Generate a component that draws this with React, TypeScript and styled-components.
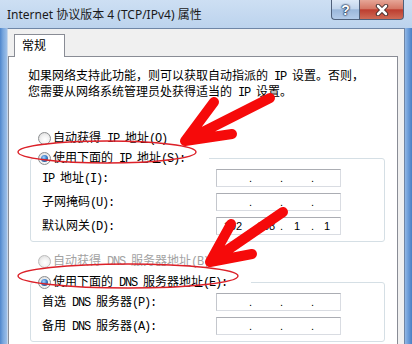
import styled, { createGlobalStyle } from "styled-components";

const GlobalStyle = createGlobalStyle`
  html, body {
    margin: 0;
    padding: 0;
    background: #fff;
  }
  body {
    font-family: "Noto Sans CJK SC", sans-serif;
  }
`;

const ASCII = /([\x20-\x7e]+)/;

// SimSun draws latin at half width, so ascii runs get a mono face squeezed to 6px
function Mixed({ text }: { text: string }) {
  return (
    <>
      {text.split(ASCII).map((part, index) =>
        ASCII.test(part) ? <Half key={index}>{part}</Half> : part
      )}
    </>
  );
}

interface IpProps {
  value?: string[];
}

function IpField({ value = ["", "", "", ""] }: IpProps) {
  return (
    <IpBox>
      <IpPart>{value[0]}</IpPart>
      <IpDot>.</IpDot>
      <IpPart>{value[1]}</IpPart>
      <IpDot>.</IpDot>
      <IpPart>{value[2]}</IpPart>
      <IpDot>.</IpDot>
      <IpPart>{value[3]}</IpPart>
    </IpBox>
  );
}

interface RadioProps {
  label: string;
  checked?: boolean;
  disabled?: boolean;
}

function Radio({ label, checked, disabled }: RadioProps) {
  return (
    <RadioLabel $disabled={disabled}>
      <RadioDot $checked={checked} $disabled={disabled} />
      <span>
        <Mixed text={label} />
      </span>
    </RadioLabel>
  );
}

const ipRows = [
  { label: "IP 地址(I):", value: undefined },
  { label: "子网掩码(U):", value: undefined },
  { label: "默认网关(D):", value: ["192", "168", "1", "1"] },
];

const dnsRows = [
  { label: "首选 DNS 服务器(P):" },
  { label: "备用 DNS 服务器(A):" },
];

export default function App() {
  return (
    <>
      <GlobalStyle />
      <Window>
        <TitleBar>
          <Title>Internet 协议版本 4 (TCP/IPv4) 属性</Title>
          <Captions>
            <CaptionButton $kind="help">?</CaptionButton>
            <CaptionButton $kind="close">
              <svg width="14" height="12" viewBox="0 0 14 12">
                <path
                  d="M3 2 L11 10 M11 2 L3 10"
                  stroke="#3a2626"
                  strokeWidth="4.4"
                  strokeLinecap="round"
                />
                <path
                  d="M3 2 L11 10 M11 2 L3 10"
                  stroke="#fff"
                  strokeWidth="2.6"
                  strokeLinecap="round"
                />
              </svg>
            </CaptionButton>
          </Captions>
        </TitleBar>

        <Frame>
          <TabRow>
            <Tab>常规</Tab>
          </TabRow>
          <Panel>
            <Intro>
              <Mixed text="如果网络支持此功能，则可以获取自动指派的 IP 设置。否则，" />
              <br />
              <Mixed text="您需要从网络系统管理员处获得适当的 IP 设置。" />
            </Intro>

            <TopRadio>
              <Radio label="自动获得 IP 地址(O)" />
            </TopRadio>

            <Group $top={4}>
              <Legend>
                <Radio label="使用下面的 IP 地址(S):" checked />
              </Legend>
              <FieldGrid>
                {ipRows.map((row) => (
                  <FieldRow key={row.label}>
                    <FieldLabel>
                      <Mixed text={row.label} />
                    </FieldLabel>
                    <IpField value={row.value} />
                  </FieldRow>
                ))}
              </FieldGrid>
            </Group>

            <TopRadio $top={11}>
              <Radio label="自动获得 DNS 服务器地址(B)" disabled />
            </TopRadio>

            <Group $top={5}>
              <Legend>
                <Radio label="使用下面的 DNS 服务器地址(E):" checked />
              </Legend>
              <FieldGrid>
                {dnsRows.map((row) => (
                  <FieldRow key={row.label}>
                    <FieldLabel>
                      <Mixed text={row.label} />
                    </FieldLabel>
                    <IpField />
                  </FieldRow>
                ))}
              </FieldGrid>
            </Group>
          </Panel>
        </Frame>

        <Marks width="412" height="344" viewBox="0 0 412 344">
          <ellipse cx="107" cy="152" rx="89" ry="11" fill="none" stroke="#dc2028" strokeWidth="1.4" />
          <ellipse cx="128" cy="276" rx="110" ry="12" fill="none" stroke="#dc2028" strokeWidth="1.4" />
          <path
            d="M270 98 L185 141 M214 102 L185 141 L232 134"
            fill="none"
            stroke="#f60a0a"
            strokeWidth="10"
            strokeLinecap="round"
            strokeLinejoin="round"
          />
          <path
            d="M283 212 L210 262 M231 224 L210 262 L252 254"
            fill="none"
            stroke="#f60a0a"
            strokeWidth="10"
            strokeLinecap="round"
            strokeLinejoin="round"
          />
        </Marks>
      </Window>
    </>
  );
}

const Window = styled.div`
  position: relative;
  width: 412px;
  height: 344px;
  overflow: hidden;
  display: flex;
  flex-direction: column;
  background: linear-gradient(
    90deg,
    #4f86cc 0,
    #78a6dd 3px,
    #9dbfe8 7px,
    #9dbfe8 404px,
    #6f9fda 408px,
    #4a7fc4 412px
  );
`;

const TitleBar = styled.div`
  flex: none;
  height: 28px;
  display: flex;
  align-items: flex-start;
  background: linear-gradient(180deg, #cddff3, #bcd3ed);
`;

const Title = styled.div`
  padding: 7px 0 0 7px;
  font-family: "Noto Sans", "Noto Sans CJK SC", sans-serif;
  font-size: 12px;
  line-height: 16px;
  color: #1a1a1a;
  white-space: nowrap;
`;

const Captions = styled.div`
  margin-left: auto;
  margin-right: 8px;
  display: flex;
`;

const CaptionButton = styled.div<{ $kind: "help" | "close" }>`
  box-sizing: border-box;
  width: ${(p) => (p.$kind === "close" ? 45 : 28)}px;
  height: 20px;
  display: flex;
  align-items: center;
  justify-content: center;
  border: 1px solid #4f607a;
  border-top: none;
  border-right: ${(p) => (p.$kind === "help" ? "none" : "1px solid #4f607a")};
  border-radius: ${(p) => (p.$kind === "help" ? "0 0 0 4px" : "0 0 4px 0")};
  background: ${(p) =>
    p.$kind === "help"
      ? "linear-gradient(180deg, #dde9f7 0%, #c2d5ec 45%, #9bb7da 52%, #b3cbe9 100%)"
      : "linear-gradient(180deg, #e6a697 0%, #d57866 45%, #bd3e30 52%, #cf6b56 100%)"};
  color: #fff;
  font-family: "Liberation Sans", sans-serif;
  font-weight: 700;
  font-size: 14px;
  text-shadow: 0 0 1px #13294a, 0 0 2px #13294a, 0 0 2px #13294a;
`;

const Frame = styled.div`
  flex: 1;
  margin: 0 7px;
  border: 1px solid #6f86a6;
  border-left-color: #c6d6ea;
  border-bottom: none;
  background: #f0f0f0;
  padding-top: 5px;
  display: flex;
  flex-direction: column;
`;

const TabRow = styled.div`
  display: flex;
  padding-left: 6px;
`;

const Tab = styled.div`
  position: relative;
  z-index: 1;
  box-sizing: border-box;
  width: 51px;
  height: 23px;
  margin-bottom: -1px;
  padding: 2px 0 0 7px;
  border: 1px solid #898c95;
  border-bottom: none;
  background: #fff;
  font-size: 12px;
  line-height: 16px;
  color: #000;
`;

const Panel = styled.div`
  flex: none;
  height: 320px;
  margin-right: 6px;
  padding-top: 11px;
  border: 1px solid #898c95;
  background: #fff;
  display: flex;
  flex-direction: column;
  align-items: stretch;
`;

const Half = styled.span`
  display: inline-block;
  white-space: pre;
  line-height: inherit;
  font-family: "Liberation Mono", monospace;
  letter-spacing: -1.2px;
`;

const Intro = styled.p`
  margin: 0 0 0 19px;
  font-size: 12px;
  line-height: 13px;
  color: #000;
  white-space: nowrap;
`;

const TopRadio = styled.div<{ $top?: number }>`
  margin: ${(p) => p.$top ?? 30}px 0 0 29px;
`;

const RadioLabel = styled.label<{ $disabled?: boolean }>`
  display: flex;
  align-items: center;
  gap: 2px;
  height: 16px;
  font-size: 12px;
  line-height: 16px;
  white-space: nowrap;
  color: ${(p) => (p.$disabled ? "#a2a2a2" : "#000")};
`;

const RadioDot = styled.span<{ $checked?: boolean; $disabled?: boolean }>`
  flex: none;
  box-sizing: border-box;
  width: 13px;
  height: 13px;
  border-radius: 50%;
  border: 1px solid ${(p) => (p.$disabled ? "#bcbcbc" : "#8c8e90")};
  background: radial-gradient(circle at 55% 60%, #fff 0%, #f2f2f2 45%, #d4d4d4 100%);
  display: grid;
  place-items: center;

  &::after {
    content: "";
    display: ${(p) => (p.$checked ? "block" : "none")};
    width: 7px;
    height: 7px;
    border-radius: 50%;
    background: radial-gradient(circle at 40% 35%, #a6d4ff 0%, #3a7cc8 45%, #173f78 100%);
  }
`;

const Group = styled.fieldset<{ $top: number }>`
  margin: ${(p) => p.$top}px 12px 0 21px;
  padding: 3px 0 6px 5px;
  border: 1px solid #d5dfe5;
  border-radius: 3px;
  min-inline-size: 0;
`;

const Legend = styled.legend`
  padding: 0 24px 0 2px;
  height: 16px;
`;

const FieldGrid = styled.div`
  margin-left: 6px;
  display: flex;
  flex-direction: column;
  gap: 6px;
`;

const FieldRow = styled.div`
  display: grid;
  grid-template-columns: 174px 125px;
  align-items: center;
`;

const FieldLabel = styled.span`
  font-size: 12px;
  line-height: 16px;
  color: #000;
  white-space: nowrap;
`;

const IpBox = styled.div`
  box-sizing: border-box;
  height: 18px;
  border: 1px solid #d9dce2;
  border-top-color: #abadb3;
  border-left-color: #c4c7cd;
  background: #fff;
  display: grid;
  grid-template-columns: 32px 3px 28px 3px 28px 3px 1fr;
  align-items: center;
  font-family: "Liberation Sans", sans-serif;
  font-size: 11px;
  line-height: 14px;
  color: #000;
`;

const IpPart = styled.span`
  text-align: center;
`;

const IpDot = styled.span`
  text-align: center;
`;

const Marks = styled.svg`
  position: absolute;
  left: 0;
  top: 0;
  pointer-events: none;
`;
